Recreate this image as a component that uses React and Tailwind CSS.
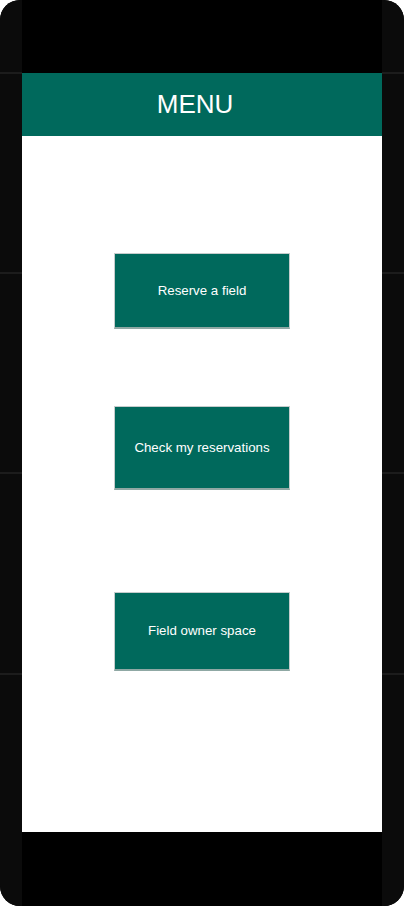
const buttons = [
  { label: 'Reserve a field', h: 'h-[76px]', mt: 'mt-[117px]' },
  { label: 'Check my reservations', h: 'h-[84px]', mt: 'mt-[77px]' },
  { label: 'Field owner space', h: 'h-[79px]', mt: 'mt-[102px]' },
]

// Bordes laterales del marco del teléfono
function SideStrip() {
  return (
    <div className="w-[22px] bg-[#0b0b0b] flex flex-col">
      <div className="h-[72px]" />
      <div className="h-[200px] border-t-2 border-[#1c1c1c]" />
      <div className="h-[200px] border-t-2 border-[#1c1c1c]" />
      <div className="h-[201px] border-t-2 border-[#1c1c1c]" />
      <div className="flex-1 border-t-2 border-[#1c1c1c]" />
    </div>
  )
}

export default function App() {
  return (
    <div className="w-[404px] h-[906px] bg-white">
      <div className="w-full h-full rounded-[20px] overflow-hidden flex bg-black">
        <SideStrip />
        <div className="flex-1 flex flex-col">
          <div className="h-[73px] bg-black" />
          <div className="h-[63px] bg-[#00695c] flex items-center justify-center pr-[14px]">
            <span className="text-white text-[26px] font-['Liberation_Sans',Arial,sans-serif]">MENU</span>
          </div>
          <div className="h-[696px] bg-white flex flex-col items-center">
            {buttons.map((b) => (
              <button
                key={b.label}
                className={`${b.h} ${b.mt} w-[176px] bg-[#00695c] border border-[#c5cccc] border-b-2 border-b-[#8fa8a4] text-white text-[13.3px] font-['Liberation_Sans',Arial,sans-serif] flex items-center justify-center`}
              >
                {b.label}
              </button>
            ))}
          </div>
          <div className="flex-1 bg-black" />
        </div>
        <SideStrip />
      </div>
    </div>
  )
}
